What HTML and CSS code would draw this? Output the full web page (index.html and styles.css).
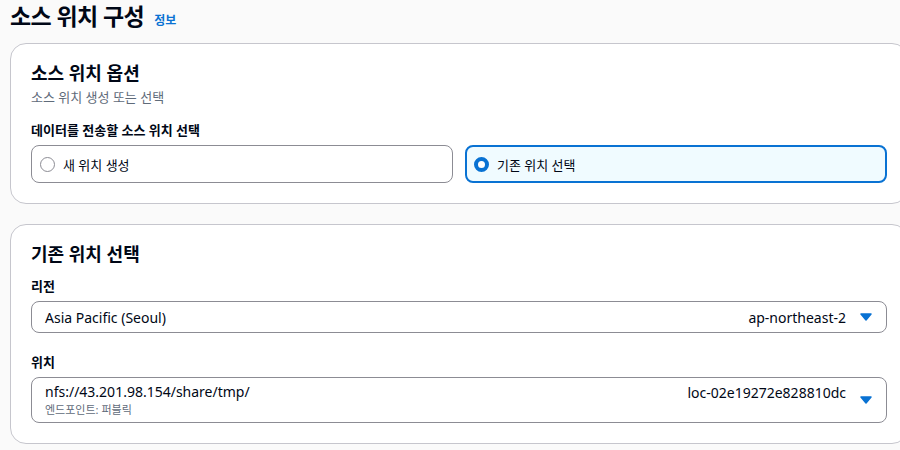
FILE: index.html
```html
<!DOCTYPE html>
<html lang="ko">
<head>
<meta charset="utf-8">
<link rel="stylesheet" href="styles.css">
</head>
<body>
<div class="page">
  <div class="page-header">
    <h1 class="page-title">소스 위치 구성</h1>
    <a class="info-link">정보</a>
  </div>

  <section class="card">
    <h2 class="card-title">소스 위치 옵션</h2>
    <p class="card-desc">소스 위치 생성 또는 선택</p>
    <div class="field">
      <div class="field-label">데이터를 전송할 소스 위치 선택</div>
      <div class="tiles">
        <div class="tile">
          <span class="radio"></span>
          <span class="tile-text">새 위치 생성</span>
        </div>
        <div class="tile tile-selected">
          <span class="radio radio-checked"></span>
          <span class="tile-text">기존 위치 선택</span>
        </div>
      </div>
    </div>
  </section>

  <section class="card">
    <h2 class="card-title card-title-2">기존 위치 선택</h2>
    <div class="field">
      <div class="field-label">리전</div>
      <div class="select">
        <span class="select-main">Asia Pacific (Seoul)</span>
        <span class="select-tag">ap-northeast-2</span>
        <svg class="caret" width="12" height="8" viewBox="0 0 12 8"><path d="M1 1h10L6 7z" fill="#0972d3" stroke="#0972d3" stroke-width="1.5" stroke-linejoin="round"/></svg>
      </div>
    </div>
    <div class="field field-2">
      <div class="field-label">위치</div>
      <div class="select select-tall">
        <span class="select-main">
          <span class="select-value">nfs://43.201.98.154/share/tmp/</span>
          <span class="select-sub">엔드포인트: 퍼블릭</span>
        </span>
        <span class="select-tag select-tag-top">loc-02e19272e828810dc</span>
        <svg class="caret" width="12" height="8" viewBox="0 0 12 8"><path d="M1 1h10L6 7z" fill="#0972d3" stroke="#0972d3" stroke-width="1.5" stroke-linejoin="round"/></svg>
      </div>
    </div>
  </section>
</div>
</body>
</html>
```

FILE: styles.css
```css
html, body {
  margin: 0;
  padding: 0;
  overflow: hidden;
  background: #fafafa;
}
body {
  font-family: "Noto Sans", "Noto Sans CJK KR", sans-serif;
  color: #000716;
}
.page {
  padding: 0 0 0 10px;
  width: 898px;
}
.page-header {
  display: flex;
  align-items: baseline;
  gap: 10px;
  height: 46px;
  margin-top: -3px;
}
.page-title {
  margin: 0;
  font-size: 23px;
  font-weight: 700;
  line-height: 38px;
  letter-spacing: -0.6px;
}
.info-link {
  color: #0972d3;
  font-size: 12px;
  font-weight: 700;
}
.card {
  background: #ffffff;
  border: 1px solid #c6c6cd;
  border-radius: 16px;
  padding: 14px 20px 20px 20px;
  margin-bottom: 20px;
}
.card-title {
  margin: 0;
  font-size: 18px;
  font-weight: 700;
  line-height: 30px;
}
.card-desc {
  margin: 0;
  font-size: 13px;
  color: #5f6b7a;
  line-height: 19px;
}
.field {
  margin-top: 12px;
}
.field-label {
  font-size: 13px;
  font-weight: 700;
  line-height: 22px;
  margin-bottom: 4px;
}
.tiles {
  display: grid;
  grid-template-columns: 1fr 1fr;
  gap: 12px;
}
.tile {
  display: flex;
  align-items: center;
  gap: 8px;
  height: 36px;
  border: 1px solid #8c8c94;
  border-radius: 8px;
  padding: 0 12px 0 8px;
}
.tile-selected {
  border: 2px solid #0972d3;
  background: #f0fbff;
  padding-left: 7px;
  height: 34px;
}
.tile-text {
  font-size: 13px;
}
.radio {
  box-sizing: border-box;
  width: 15px;
  height: 15px;
  border-radius: 50%;
  border: 1.2px solid #8c8c94;
  background: #fff;
}
.radio-checked {
  border: 4px solid #0972d3;
}
.card-title-2 + .field {
  margin-top: 6px;
}
.field-2 {
  margin-top: 18px;
}
.select {
  display: flex;
  align-items: center;
  border: 1px solid #8c8c94;
  border-radius: 8px;
  height: 30px;
  margin-top: 1px;
  padding: 0 14px 0 13px;
  font-size: 14px;
}
.select-main {
  flex: 1;
}
.select-tag {
  margin-right: 14px;
}
.caret {
  display: block;
}
.select-tall {
  height: 44px;
  align-items: center;
}
.select-value {
  display: block;
  line-height: 19px;
  margin-top: 1px;
}
.select-sub {
  display: block;
  font-size: 11px;
  color: #5f6b7a;
  line-height: 18px;
}
.select-tag-top {
  align-self: flex-start;
  margin-top: 5px;
  line-height: 19px;
}
```
